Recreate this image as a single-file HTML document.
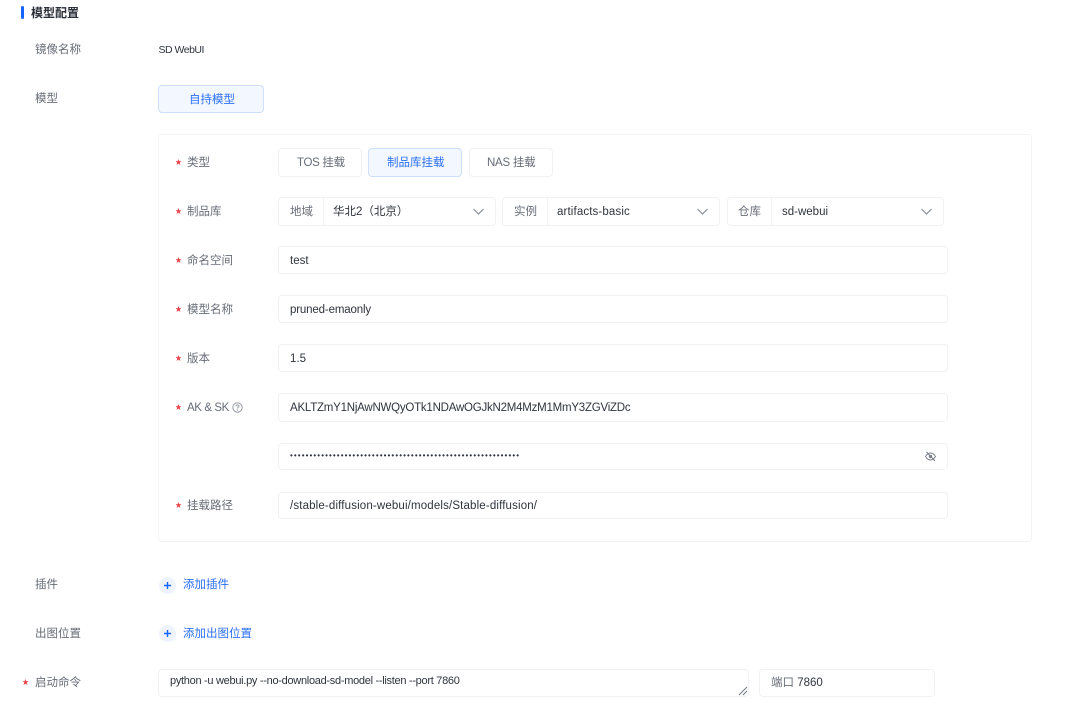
<!DOCTYPE html>
<html lang="zh"><head><meta charset="utf-8"><title>模型配置</title>
<style>
html,body{margin:0;padding:0;background:#fff}
body{width:1080px;height:720px;overflow:hidden;position:relative;font-family:"Liberation Sans","Noto Sans CJK SC",sans-serif;font-size:11.5px;color:#2f343d}
.t{position:absolute;white-space:nowrap;line-height:16px;height:16px}
.l{color:#666c77}
.b{position:absolute;box-sizing:border-box;border:1px solid #eff1f4;border-radius:4px;background:#fff}
.a{border-color:#cfdffb;background:#f3f7ff}
.bl{color:#2a70f5}
.s{position:absolute;width:6px;height:6px;background:#e5484d;clip-path:polygon(50% 0,63% 35%,100% 38%,72% 60%,82% 100%,50% 78%,18% 100%,28% 60%,0 38%,37% 35%)}
svg{position:absolute;overflow:visible}
.d{position:absolute;top:0;bottom:0;width:1px;background:#eff1f4}
</style></head><body>
<div style="position:absolute;left:21px;top:6px;width:3px;height:13px;background:#1664ff;border-radius:2px"></div>
<div class="t" style="left:31px;top:5px;font-size:12px;font-weight:700;color:#2a2f38">模型配置</div>

<div class="t l" style="left:35px;top:42px">镜像名称</div>
<div class="t" style="left:158.5px;top:42px;font-size:10.5px;letter-spacing:-.5px">SD WebUI</div>

<div class="t l" style="left:35px;top:91px">模型</div>
<div class="b a" style="left:158px;top:85px;width:106px;height:28px"></div>
<div class="t bl" style="left:189px;top:92px">自持模型</div>

<div class="b" style="left:158px;top:134px;width:874px;height:408px;border-color:#f3f4f6"></div>

<div class="s" style="left:175.500px;top:159px"></div><div class="t l" style="left:187px;top:155px">类型</div>
<div class="b" style="left:278px;top:148px;width:84px;height:29px"></div>
<div class="t l" style="left:297px;top:155px;letter-spacing:-.3px">TOS 挂载</div>
<div class="b a" style="left:368px;top:148px;width:94px;height:29px"></div>
<div class="t bl" style="left:387px;top:155px">制品库挂载</div>
<div class="b" style="left:469px;top:148px;width:84px;height:29px"></div>
<div class="t l" style="left:487px;top:155px;letter-spacing:-.25px">NAS 挂载</div>

<div class="s" style="left:175.500px;top:208px"></div><div class="t l" style="left:187px;top:204px">制品库</div>
<div class="b" style="left:278px;top:197px;width:218px;height:29px"><div class="d" style="left:44px"></div></div>
<div class="t l" style="left:290px;top:204px">地域</div>
<div class="t" style="left:333px;top:204px">华北2（北京）</div>
<svg style="left:473px;top:208px" width="11" height="7" viewBox="0 0 11 7"><path d="M.5 1l5 5 5-5" fill="none" stroke="#7a818c" stroke-width="1"/></svg>
<div class="b" style="left:502px;top:197px;width:218px;height:29px"><div class="d" style="left:44px"></div></div>
<div class="t l" style="left:514px;top:204px">实例</div>
<div class="t" style="left:557px;top:204px;letter-spacing:.13px">artifacts-basic</div>
<svg style="left:697px;top:208px" width="11" height="7" viewBox="0 0 11 7"><path d="M.5 1l5 5 5-5" fill="none" stroke="#7a818c" stroke-width="1"/></svg>
<div class="b" style="left:727px;top:197px;width:217px;height:29px"><div class="d" style="left:43px"></div></div>
<div class="t l" style="left:738px;top:204px">仓库</div>
<div class="t" style="left:782px;top:204px">sd-webui</div>
<svg style="left:921px;top:208px" width="11" height="7" viewBox="0 0 11 7"><path d="M.5 1l5 5 5-5" fill="none" stroke="#7a818c" stroke-width="1"/></svg>

<div class="s" style="left:175.500px;top:257px"></div><div class="t l" style="left:187px;top:253px">命名空间</div>
<div class="b" style="left:278px;top:246px;width:670px;height:28px"></div>
<div class="t" style="left:290px;top:253px">test</div>

<div class="s" style="left:175.500px;top:306px"></div><div class="t l" style="left:187px;top:302px">模型名称</div>
<div class="b" style="left:278px;top:295px;width:670px;height:28px"></div>
<div class="t" style="left:290px;top:302px;letter-spacing:-.15px">pruned-emaonly</div>

<div class="s" style="left:175.500px;top:355px"></div><div class="t l" style="left:187px;top:351px">版本</div>
<div class="b" style="left:278px;top:344px;width:670px;height:28px"></div>
<div class="t" style="left:290px;top:351px">1.5</div>

<div class="s" style="left:175.500px;top:404px"></div><div class="t l" style="left:187px;top:400px;letter-spacing:-.4px">AK &amp; SK</div>
<svg style="left:232px;top:402px" width="11" height="11" viewBox="0 0 11 11"><circle cx="5.500" cy="5.500" r="4.700" fill="none" stroke="#8a909a" stroke-width=".9"/><path d="M4 4.400c0-1 .7-1.500 1.500-1.500S7 3.400 7 4.200c0 1.100-1.500 1.100-1.500 2.300" fill="none" stroke="#8a909a" stroke-width=".9"/><circle cx="5.500" cy="8" r=".6" fill="#8a909a"/></svg>
<div class="b" style="left:278px;top:393px;width:670px;height:29px"></div>
<div class="t" style="left:290px;top:400px;letter-spacing:-.23px">AKLTZmY1NjAwNWQyOTk1NDAwOGJkN2M4MzM1MmY3ZGViZDc</div>

<div class="b" style="left:278px;top:443px;width:670px;height:27px"></div>
<div class="t" style="left:290px;top:448px;width:231px;overflow:hidden;font-size:8px;letter-spacing:1.1px">•••••••••••••••••••••••••••••••••••••••••••••••••••••••••••</div>
<svg style="left:925px;top:451px" width="11" height="11" viewBox="0 0 11 11"><path d="M.5 5.500C2 3 3.600 2 5.500 2s3.500 1 5 3.500C9 8 7.400 9 5.500 9S2 8 .5 5.500z" fill="none" stroke="#7a818c"/><circle cx="5.500" cy="5.500" r="1.700" fill="#7a818c"/><path d="M1.500 1l8.500 9" stroke="#7a818c"/></svg>

<div class="s" style="left:175.500px;top:502px"></div><div class="t l" style="left:187px;top:498px">挂载路径</div>
<div class="b" style="left:278px;top:492px;width:670px;height:27px"></div>
<div class="t" style="left:290px;top:498px;letter-spacing:.15px">/stable-diffusion-webui/models/Stable-diffusion/</div>

<div class="t l" style="left:35px;top:577px">插件</div>
<div style="position:absolute;left:159px;top:577px;width:17px;height:17px;border-radius:50%;background:#eef3fe"></div>
<svg style="left:164px;top:582px" width="7" height="7" viewBox="0 0 7 7"><path d="M3.500 0v7M0 3.500h7" stroke="#1664ff" stroke-width="1.400"/></svg>
<div class="t bl" style="left:183px;top:577px">添加插件</div>

<div class="t l" style="left:35px;top:626px">出图位置</div>
<div style="position:absolute;left:159px;top:625px;width:17px;height:17px;border-radius:50%;background:#eef3fe"></div>
<svg style="left:164px;top:630px" width="7" height="7" viewBox="0 0 7 7"><path d="M3.500 0v7M0 3.500h7" stroke="#1664ff" stroke-width="1.400"/></svg>
<div class="t bl" style="left:183px;top:626px">添加出图位置</div>

<div class="s" style="left:22.500px;top:679px"></div><div class="t l" style="left:35px;top:675px">启动命令</div>
<div class="b" style="left:158px;top:669px;width:591px;height:28px"></div>
<div class="t" style="left:170px;top:673px;font-size:11px;letter-spacing:-.29px">python -u webui.py --no-download-sd-model --listen --port 7860</div>
<svg style="left:738px;top:686px" width="10" height="10" viewBox="0 0 10 10"><path d="M1 9l8-8M5 9l4-4" stroke="#6b7280" stroke-width=".9"/></svg>
<div class="b" style="left:759px;top:669px;width:176px;height:28px"></div>
<div class="t" style="left:771px;top:675px"><span class="l">端口</span> 7860</div>
</body></html>
